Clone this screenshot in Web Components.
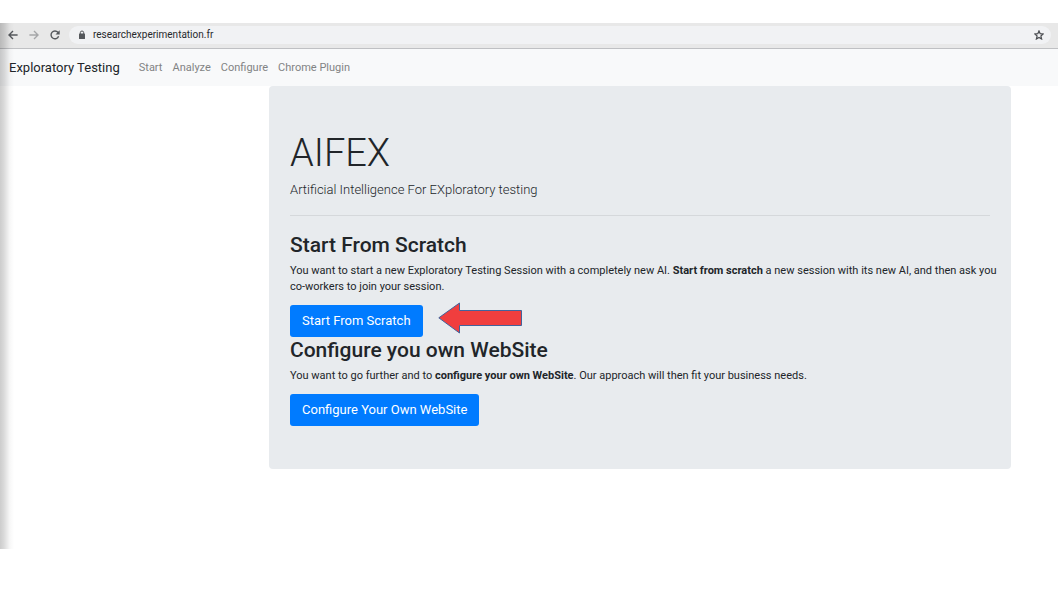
<!DOCTYPE html>
<html lang="en">
<head>
<meta charset="utf-8">
<meta name="viewport" content="width=device-width, initial-scale=1">
<title>AIFEX - Exploratory Testing</title>
<style>
  body { margin: 0; background: #fff; font-family: Roboto, "Liberation Sans", sans-serif; font-size: 11px; line-height: 16px; color: #212529; }
</style>
</head>
<body>
<browser-window>
  <browser-toolbar slot="toolbar" address="researchexperimentation.fr"></browser-toolbar>
  <site-navbar brand="Exploratory Testing">
    <nav-item>Start</nav-item>
    <nav-item>Analyze</nav-item>
    <nav-item>Configure</nav-item>
    <nav-item>Chrome Plugin</nav-item>
  </site-navbar>
  <jumbo-panel>
    <span slot="title">AIFEX</span>
    <span slot="lead">Artificial Intelligence For EXploratory testing</span>
    <action-section action="Start From Scratch">
      <span slot="heading">Start From Scratch</span>
      You want to start a new Exploratory Testing Session with a completely new AI. <b>Start from scratch</b> a new session with its new AI, and then ask you co-workers to join your session.
      <pointer-arrow slot="hint"></pointer-arrow>
    </action-section>
    <action-section action="Configure Your Own WebSite">
      <span slot="heading">Configure you own WebSite</span>
      You want to go further and to <b>configure your own WebSite</b>. Our approach will then fit your business needs.
    </action-section>
  </jumbo-panel>
</browser-window>

<script>
  const define = (name, html, setup) => {
    const template = document.createElement('template');
    template.innerHTML = html;
    customElements.define(name, class extends HTMLElement {
      constructor() {
        super();
        this.attachShadow({ mode: 'open' }).append(template.content.cloneNode(true));
      }
      connectedCallback() {
        if (setup) setup(this, this.shadowRoot);
      }
    });
  };

  define('browser-window', `
    <style>
      :host { display: block; position: relative; margin: 23px 0 46px; padding-bottom: 80px; }
      /* soft shade down the left edge of the window */
      :host::after {
        content: ""; position: absolute; inset: 0 auto 0 0; width: 14px; pointer-events: none;
        background: linear-gradient(to right, rgba(0,0,0,.2), rgba(0,0,0,.14) 30%, rgba(0,0,0,.03) 70%, transparent);
      }
    </style>
    <slot name="toolbar"></slot>
    <slot></slot>`);

  define('browser-toolbar', `
    <style>
      :host { display: flex; align-items: center; gap: 7px; height: 24px; padding: 0 7px 1px 6px; background: #e8e8e8; border-bottom: 1px solid #bfc0c3; }
      button { display: flex; width: 14px; height: 14px; padding: 0; border: 0; background: none; align-items: center; justify-content: center; color: #55585c; }
      button:disabled { color: #a5a6a8; }
      .bar { flex: 1; display: flex; align-items: center; height: 18px; padding: 0 5px 0 9px; border-radius: 9px; background: #f1f2f4; }
      input { flex: 1; min-width: 0; height: 16px; margin-left: 7px; padding: 0; border: 0; outline: 0; background: none; color: #27292c; font: 10px/16px Roboto, sans-serif; }
      svg { display: block; }
    </style>
    <button aria-label="Back"><svg width="10" height="10" viewBox="0 0 10 10" fill="none" stroke="currentColor" stroke-width="1.4"><path d="M9.6 5H1.2M5 1L1 5l4 4"/></svg></button>
    <button aria-label="Forward" disabled><svg width="10" height="10" viewBox="0 0 10 10" fill="none" stroke="currentColor" stroke-width="1.4"><path d="M.4 5h8.4M5 1l4 4-4 4"/></svg></button>
    <button aria-label="Reload"><svg width="10" height="10" viewBox="0 0 10 10"><path d="M8.6 6.3A3.9 3.9 0 1 1 7.9 2.3L8.7 3.2" fill="none" stroke="currentColor" stroke-width="1.4"/><path d="M9.7.3v4.2H5.5z" fill="currentColor"/></svg></button>
    <div class="bar">
      <svg width="8" height="10" viewBox="0 0 8 10"><path d="M2.3 4V2.7a1.7 1.7 0 0 1 3.4 0V4" fill="none" stroke="#55585c"/><rect x="1" y="3.6" width="6" height="5.4" rx=".6" fill="#55585c"/></svg>
      <input type="text" aria-label="Address" spellcheck="false">
      <button aria-label="Bookmark this page"><svg width="10" height="10" viewBox="0 0 10 10"><path d="M5 .9l1.2 2.8 3 .3-2.3 2 .7 3L5 7.4 2.4 9l.7-3L.8 4l3-.3z" fill="none" stroke="#4b4d51" stroke-width="1.2"/></svg></button>
    </div>`, (host, root) => {
      root.querySelector('input').value = host.getAttribute('address');
    });

  define('site-navbar', `
    <style>
      :host { display: block; background: #f8f9fa; }
      nav { display: flex; align-items: center; min-height: 37px; padding: 0 9px; gap: 10px; }
      .brand { margin-right: 9px; font-size: 13px; line-height: 20px; color: #212529; text-decoration: none; white-space: nowrap; }
    </style>
    <nav><a class="brand" href="#"></a><slot></slot></nav>`, (host, root) => {
      root.querySelector('.brand').textContent = host.getAttribute('brand');
    });

  define('nav-item', `
    <style>
      :host { display: block; white-space: nowrap; }
      a { color: #828384; text-decoration: none; }
    </style>
    <a href="#"><slot></slot></a>`);

  define('jumbo-panel', `
    <style>
      :host { display: block; margin: 0 47px 0 269px; padding: 43px 21px; border-radius: 4px; background: #e8ebee; }
      h1 { margin: 0 0 3px; font-size: 38px; line-height: 48px; font-weight: 300; }
      p { margin: 0; font-size: 13px; line-height: 20px; font-weight: 300; }
      hr { margin: 15px 0 16px; border: 0; border-top: 1px solid #d5d8db; }
    </style>
    <h1><slot name="title"></slot></h1>
    <p><slot name="lead"></slot></p>
    <hr>
    <slot></slot>`);

  define('action-section', `
    <style>
      :host { display: block; }
      h2 { margin: 0 0 5px; font-size: 21px; line-height: 26px; font-weight: 500; }
      p { margin: 0 -16px 10px 0; }
      .row { display: flex; align-items: center; gap: 15px; }
      button { height: 32px; padding: 0 12px; border: 0; border-radius: 3px; background: #007bff; color: #fff; font-family: inherit; font-size: 13px; line-height: 20px; }
    </style>
    <h2><slot name="heading"></slot></h2>
    <p><slot></slot></p>
    <div class="row"><button type="button"></button><slot name="hint"></slot></div>`, (host, root) => {
      root.querySelector('button').textContent = host.getAttribute('action');
    });

  define('pointer-arrow', `
    <style>
      :host { display: block; margin-top: -6px; }
      svg { display: block; }
    </style>
    <svg width="84" height="32" viewBox="0 0 84 32" aria-hidden="true"><path d="M.8 15.8L21.5 1v7.5h62v15h-62V31z" fill="#f03e3e" stroke="#41639c"/></svg>`);
</script>
</body>
</html>
